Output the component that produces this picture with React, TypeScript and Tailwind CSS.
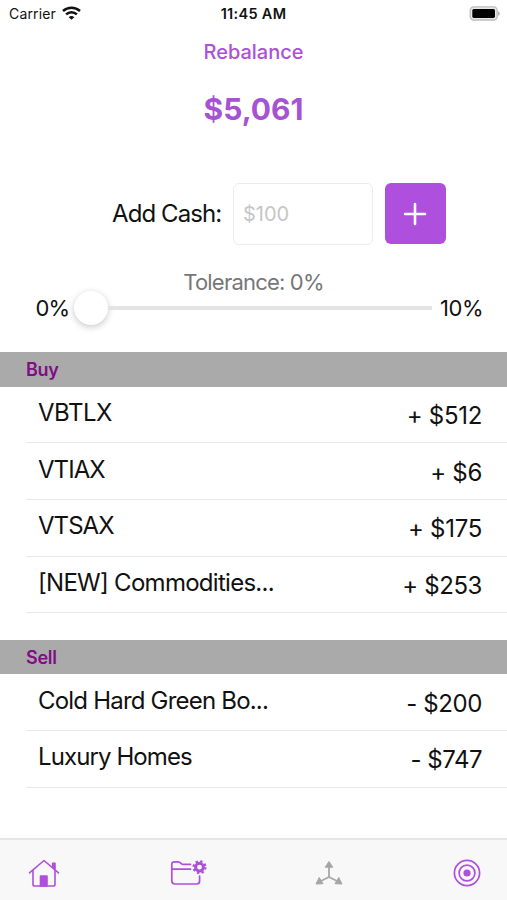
import React from "react";

type Holding = { name: string; amount: string; nameTracking: string; amountTracking: string };

const buys: Holding[] = [
  { name: "VBTLX", amount: "+ $512", nameTracking: "tracking-[-0.5px]", amountTracking: "tracking-[-0.3px]" },
  { name: "VTIAX", amount: "+ $6", nameTracking: "tracking-[-0.95px]", amountTracking: "tracking-[-0.3px]" },
  { name: "VTSAX", amount: "+ $175", nameTracking: "tracking-[-0.95px]", amountTracking: "tracking-[-0.3px]" },
  { name: "[NEW] Commodities...", amount: "+ $253", nameTracking: "tracking-[-0.72px]", amountTracking: "tracking-[-0.4px]" },
];

const sells: Holding[] = [
  { name: "Cold Hard Green Bo...", amount: "- $200", nameTracking: "tracking-[-0.8px]", amountTracking: "tracking-[-0.4px]" },
  { name: "Luxury Homes", amount: "- $747", nameTracking: "tracking-[-0.9px]", amountTracking: "tracking-[-0.5px]" },
];

function Section({ title, rows }: { title: string; rows: Holding[] }) {
  return (
    <section>
      <h2 className="flex h-[34.6px] items-center bg-[#aaaaaa] pl-[26px] text-[18px] font-semibold tracking-[-0.3px] text-[#800d86]">
        {title}
      </h2>
      <ul>
        {rows.map((row) => (
          <li
            key={row.name}
            className="ml-[26px] flex h-[56.7px] items-center justify-between border-b border-[#e8e8e8] pr-[25px] pl-[12px] text-[24px] leading-[28px] text-[#111]"
          >
            <span className={"pb-[3px] " + row.nameTracking}>{row.name}</span>
            <span className={"pt-[3px] " + row.amountTracking}>{row.amount}</span>
          </li>
        ))}
      </ul>
    </section>
  );
}

function WifiIcon() {
  return (
    <svg width="19" height="15" viewBox="0 0 19 15" fill="none" stroke="#111" strokeWidth="2.5">
      <path d="M1 5C5.8.6 13.2.6 18 5" />
      <path d="M4.1 8.4c3-2.900 7.800-2.900 10.800 0" />
      <path d="M9.500 13.800 6.700 11.200c1.600-1.500 4-1.500 5.600 0Z" fill="#111" stroke="none" />
    </svg>
  );
}

function BatteryIcon() {
  return (
    <svg width="32" height="15" viewBox="0 0 32 15">
      <rect x="1.200" y="0.800" width="27" height="13.200" rx="3.600" fill="#e6e6e6" stroke="#bdbdbd" strokeWidth="1.300" />
      <rect x="3.300" y="2.900" width="22.700" height="9" rx="1.600" fill="#000" />
      <path d="M29.200 5.200c2 .8 2 3.800 0 4.600Z" fill="#aaa" />
    </svg>
  );
}

function HomeIcon() {
  return (
    <svg width="32" height="30" viewBox="0 0 32 30" fill="none" stroke="#ad50db" strokeWidth="1.6" strokeLinecap="round" strokeLinejoin="round">
      <path d="M1.5 13.8 16 1.500l14.500 12.300" />
      <path d="M5 11.500v13.700q0 1.800 1.800 1.800h18.400q1.800 0 1.800-1.800V11.500" />
      <path d="M24.700 8.500V4.200h2.300V11" fill="#ad50db" />
      <path d="M12.500 27V17h6.500v10Z" fill="#ad50db" />
    </svg>
  );
}

function FolderGearIcon() {
  return (
    <svg width="38" height="28" viewBox="0 0 38 28" fill="none" stroke="#ad50db" strokeWidth="1.7" strokeLinecap="round" strokeLinejoin="round">
      <path d="M20.500 5.300h-7.800c-2 0-2-2.500-4.500-2.500H4.500Q1.800 2.800 1.800 5.500v16.300q0 3.200 3.200 3.200h21.600q3 0 3-3V17" />
      <path d="M2 10.200h18.500" />
      <circle cx="29.500" cy="8.200" r="3.900" strokeWidth="3" />
      <circle cx="29.500" cy="8.200" r="5.900" strokeWidth="2.300" strokeLinecap="butt" strokeDasharray="2.317 2.317" />
    </svg>
  );
}

function AxesIcon() {
  return (
    <svg width="30" height="28" viewBox="0 0 30 28" fill="#a6a6a6" stroke="#a6a6a6" strokeLinejoin="round">
      <path d="M15 6v12M15 18 5 23M15 18l10 5" fill="none" strokeWidth="1.800" />
      <path d="m15 2.500 3.800 5.700h-7.600ZM2 25l3.200-6.500 3.800 6.200ZM28 25l-3.200-6.500-3.800 6.200Z" strokeWidth="1" />
    </svg>
  );
}

function TargetIcon() {
  return (
    <svg width="28" height="28" viewBox="0 0 28 28" fill="none" stroke="#ad50db">
      <circle cx="14" cy="14" r="12.600" strokeWidth="1.700" />
      <circle cx="14" cy="14" r="7.900" strokeWidth="1.700" />
      <circle cx="14" cy="14" r="3.600" fill="#ad50db" stroke="none" />
    </svg>
  );
}

export default function App() {
  return (
    <main className="flex h-[900px] w-[507px] flex-col overflow-hidden bg-white font-['Inter',sans-serif] text-[#111]">
      <header className="grid h-[27px] grid-cols-[1fr_auto_1fr] items-center pr-[6px] pl-[6px]">
        <div className="flex items-center gap-[6px] pl-[3px] text-[14px]">
          <span className="tracking-[0.15px]">Carrier</span>
          <WifiIcon />
        </div>
        <span className="text-center text-[14.500px] font-semibold tracking-[0.3px]">11:45 AM</span>
        <div className="flex justify-end"><BatteryIcon /></div>
      </header>

      <h1 className="mt-[11px] text-center text-[20px] leading-[28px] font-medium text-[#ad50db]">Rebalance</h1>
      <p className="mt-[23px] text-center text-[30px] leading-[40px] font-bold text-[#a653d3]">$5,061</p>

      <div className="mt-[54px] flex h-[61px] items-center pl-[112px]">
        <span className="w-[121px] text-[24px] tracking-[-0.9px] whitespace-nowrap">Add Cash:</span>
        <div className="flex h-[62px] w-[140px] items-center rounded-[6px] border border-[#ececec] pl-[9px] text-[20px] text-[#c6c6c8]">$100</div>
        <button className="ml-[12px] flex h-[61px] w-[61px] items-center justify-center rounded-[6px] bg-[#ae50dd] pr-[1px]" aria-label="Add cash">
          <svg width="24" height="24" viewBox="0 0 24 24" stroke="#fff" strokeWidth="2.600" strokeLinecap="round"><path d="M12 2v20M2 12h20" /></svg>
        </button>
      </div>

      <p className="mt-[24px] text-center text-[22px] leading-[28px] tracking-[-0.8px] text-[#777]">Tolerance: 0%</p>
      <div className="-mt-[6px] flex h-[36px] items-center pl-[35.500px] text-[22px]">
        <span className="w-[38.500px] tracking-[-0.9px]">0%</span>
        <div className="flex w-[358px] items-center">
          <div className="size-[34px] shrink-0 rounded-full bg-white shadow-[0_2px_7px_rgba(0,0,0,0.22)]" />
          <div className="h-[4px] grow bg-[#e4e4e4]" />
        </div>
        <span className="ml-[8px] tracking-[-0.4px]">10%</span>
      </div>

      <div className="mt-[26px] flex flex-col gap-[26.4px]">
        <Section title="Buy" rows={buys} />
        <Section title="Sell" rows={sells} />
      </div>

      <nav className="mt-auto flex h-[62px] items-start border-t-2 border-[#e6e6e6] bg-[#f8f8f8] pt-[19px] pl-[28px]">
        <HomeIcon />
        <div className="ml-[110px]"><FolderGearIcon /></div>
        <div className="ml-[106px]"><AxesIcon /></div>
        <div className="ml-[109px]"><TargetIcon /></div>
      </nav>
    </main>
  );
}
